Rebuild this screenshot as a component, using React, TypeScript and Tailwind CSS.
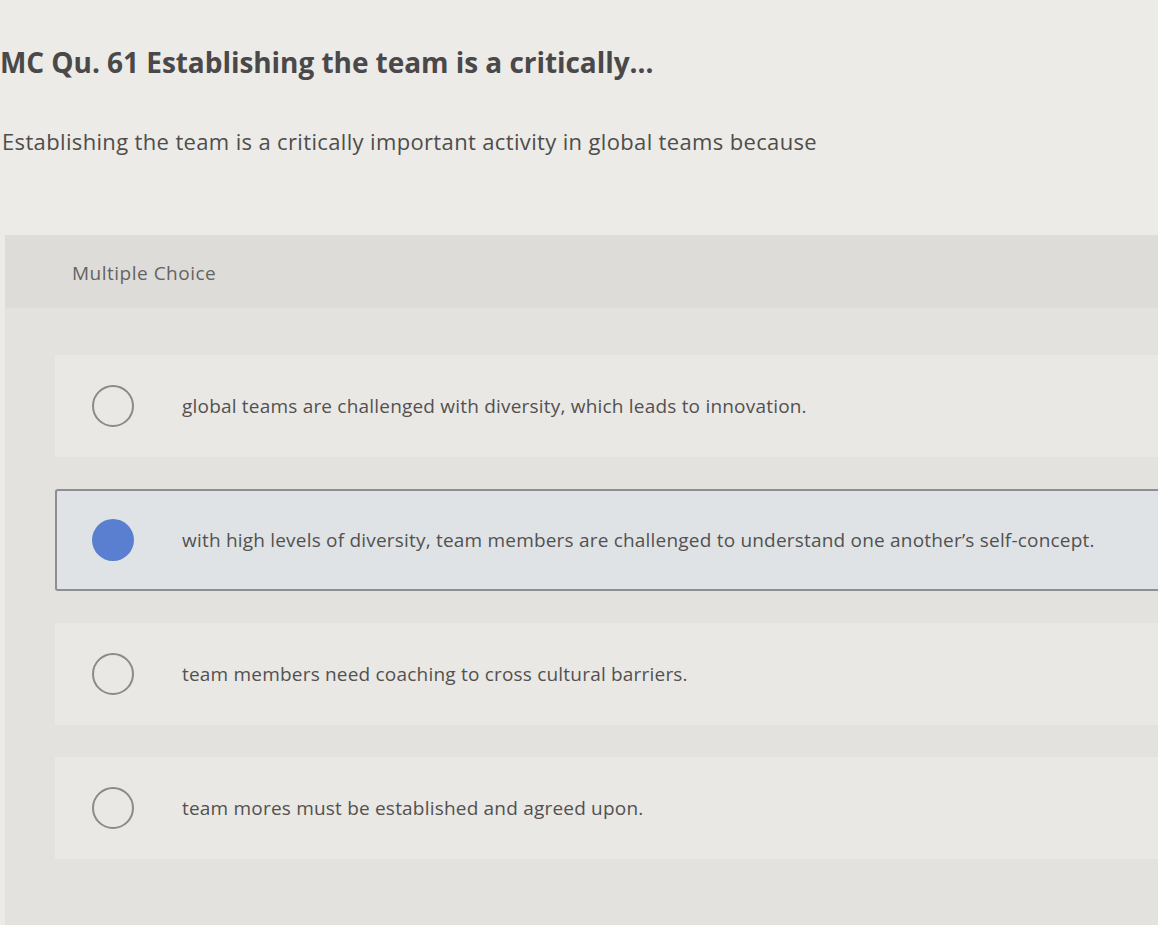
const choices = [
  'global teams are challenged with diversity, which leads to innovation.',
  'with high levels of diversity, team members are challenged to understand one another\u2019s self-concept.',
  'team members need coaching to cross cultural barriers.',
  'team mores must be established and agreed upon.',
];

function Radio({ checked }: { checked: boolean }) {
  if (checked) {
    return <span className="block w-[42px] h-[42px] rounded-full bg-[#5a7fd0] shrink-0" />;
  }
  return <span className="block w-[42px] h-[42px] rounded-full border-[2px] border-[#8c8a88] shrink-0" />;
}

export default function App() {
  const selected = 1;

  return (
    <div className="w-[1158px] h-[925px] overflow-hidden bg-[#ecebe8] font-['Open_Sans','Liberation_Sans',sans-serif] text-[#555353]">
      <h1 className="pt-[42px] pl-0 text-[28px] font-bold leading-[40px] text-[#4a4848] tracking-[-0.05px]">
        MC Qu. 61 Establishing the team is a critically...
      </h1>
      <p className="mt-[44px] pl-[2px] text-[22px] leading-[30px] text-[#4f4d4c] tracking-[0.35px]">
        Establishing the team is a critically important activity in global teams because
      </p>

      <div className="mt-[79px] ml-[5px] bg-[#e3e2df] h-[700px]">
        <div className="h-[73px] bg-[#dddcd9] flex items-center pl-[67px] pt-[4px] text-[19px] tracking-[0.5px] text-[#656363]">
          Multiple Choice
        </div>

        <div className="pt-[47px] pl-[50px] flex flex-col gap-[32px]">
          {choices.map((text, i) => {
            const isSel = i === selected;
            return (
              <div
                key={i}
                className={
                  isSel
                    ? 'h-[102px] flex items-center pl-[35px] bg-[#dfe3e6] border-[2px] border-r-0 border-[#8e8f91] rounded-l-[3px]'
                    : 'h-[102px] flex items-center pl-[37px] bg-[#e9e8e5]'
                }
              >
                <Radio checked={isSel} />
                <span className="ml-[48px] text-[19px] leading-[26px] tracking-[0.2px] text-[#535150]">{text}</span>
              </div>
            );
          })}
        </div>
      </div>
    </div>
  );
}
